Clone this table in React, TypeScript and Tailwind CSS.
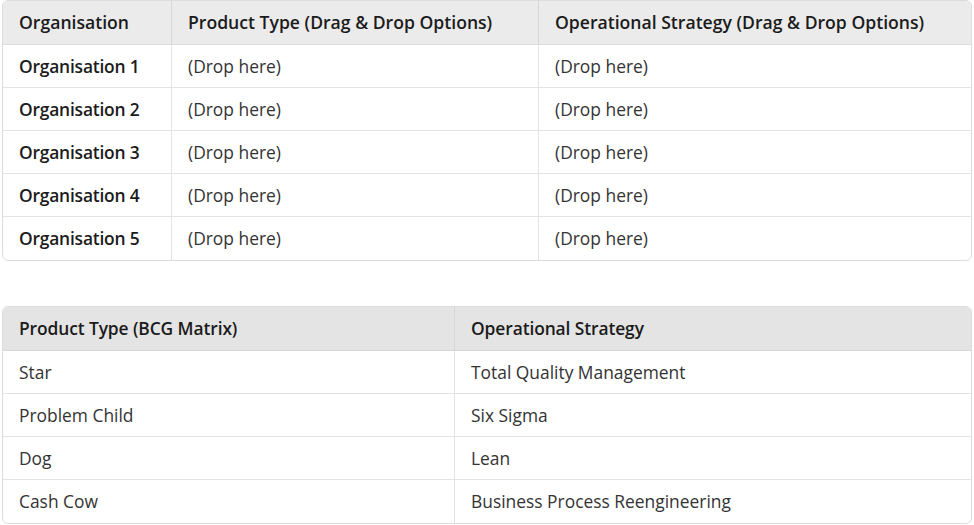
const orgs = [1, 2, 3, 4, 5];

const bcg = [
  ["Star", "Total Quality Management"],
  ["Problem Child", "Six Sigma"],
  ["Dog", "Lean"],
  ["Cash Cow", "Business Process Reengineering"],
];

export default function App() {
  return (
    <div
      className="w-[974px] h-[525px] bg-white text-[#1b1b1b] text-[17.4px] overflow-hidden"
      style={{ fontFamily: '"Open Sans", "Noto Sans", sans-serif' }}
    >
      <div className="mx-[2px] border border-[#dcdcdc] rounded-[6px] overflow-hidden">
        <div className="grid grid-cols-[169px_367px_1fr] bg-[#ebebeb] h-[44px] border-b border-[#dcdcdc] font-semibold text-[17.6px]">
          <div className="px-4 flex items-center border-r border-[#d6d6d6]">Organisation</div>
          <div className="px-4 flex items-center border-r border-[#d6d6d6]">Product Type (Drag &amp; Drop Options)</div>
          <div className="px-4 flex items-center">Operational Strategy (Drag &amp; Drop Options)</div>
        </div>
        {orgs.map((n, i) => (
          <div
            key={n}
            className={`grid grid-cols-[169px_367px_1fr] h-[43px] ${i < orgs.length - 1 ? "border-b border-[#e3e3e3]" : ""}`}
          >
            <div className="px-4 flex items-center border-r border-[#e3e3e3] font-semibold tracking-[-0.2px]">Organisation {n}</div>
            <div className="px-4 flex items-center border-r border-[#e3e3e3] text-[#333]">(Drop here)</div>
            <div className="px-4 flex items-center text-[#333]">(Drop here)</div>
          </div>
        ))}
      </div>

      <div className="mt-[45px] mx-[2px] border border-[#dcdcdc] rounded-[6px] overflow-hidden">
        <div className="grid grid-cols-[452px_1fr] bg-[#e4e4e4] h-[44px] border-b border-[#d6d6d6] font-semibold tracking-[-0.1px]">
          <div className="px-4 flex items-center border-r border-[#d6d6d6]">Product Type (BCG Matrix)</div>
          <div className="px-4 flex items-center">Operational Strategy</div>
        </div>
        {bcg.map(([a, b], i) => (
          <div
            key={a}
            className={`grid grid-cols-[452px_1fr] h-[43px] ${i < bcg.length - 1 ? "border-b border-[#e3e3e3]" : ""}`}
          >
            <div className="px-4 flex items-center border-r border-[#e3e3e3] text-[#333]">{a}</div>
            <div className="px-4 flex items-center text-[#333]">{b}</div>
          </div>
        ))}
      </div>
    </div>
  );
}
